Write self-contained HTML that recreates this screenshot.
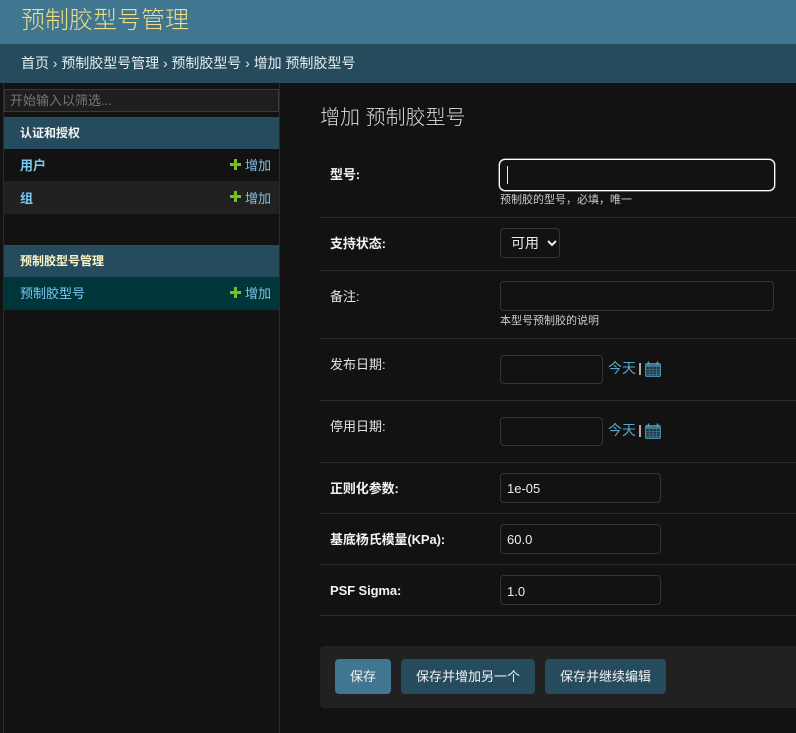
<!DOCTYPE html>
<html lang="zh">
<head>
<meta charset="utf-8">
<style>
*{box-sizing:border-box}
html,body{margin:0;padding:0}
body{width:796px;height:733px;overflow:hidden;position:relative;background:#121212;color:#eee;font-family:"Liberation Sans","Noto Sans CJK SC",sans-serif;font-size:13px}
.a{position:absolute;white-space:nowrap}
.h{left:0;top:0;width:796px;height:44px;background:#417690}
.title{left:21px;top:4px;font-size:24px;line-height:34px;color:#ecdf86;font-weight:300}
.bc{left:0;top:44px;width:796px;height:39px;background:#264b5d}
.crumb{left:21px;top:53px;font-size:14px;line-height:20px;color:#e8eef1;letter-spacing:-.03px}
.side{left:3px;top:83px;width:277px;height:650px;border-left:1px solid #2a2a2a;border-right:1px solid #2a2a2a}
.filter{left:4px;top:89px;width:275px;height:23px;background:#1e1e1e;border:1px solid #3a3a3a;color:#777;font-size:13px;line-height:21px;padding-left:5px}
.cap{left:4px;width:275px;height:32px;background:#264b5d;color:#f4f4f4;font-weight:bold;font-size:12px;line-height:33px;padding-left:16px}
.row{left:4px;width:275px;height:32px;line-height:33px;font-size:13px;color:#79aec8;padding-left:16px}
.row b{color:#79c8f0}
.add{position:absolute;right:8px;top:0;color:#7fc0e2;font-size:13px}
.plus{position:absolute;left:226px;top:10px;width:11px;height:11px}
.line{left:320px;width:476px;height:1px;background:#2a2a2a}
.lab{left:330px;font-size:13px;line-height:18px;color:#e4e4e4}
.lab.b{font-weight:bold;color:#f2f2f2;letter-spacing:-.1px}
.inp{border:1px solid #333;border-radius:4px;background:#121212;color:#eee;font-size:13px;padding-left:6px}
.help{left:500px;font-size:11px;line-height:14px;color:#ccc}
.today{font-size:14px;line-height:20px;color:#5ba6cc}
.sep{width:2px;height:12px;background:#aaa}
.btn{top:659px;height:35px;border-radius:4px;background:#264b5d;color:#f2f2f2;font-size:13px;line-height:35px;text-align:center}
</style>
</head>
<body>
<div class="a h"></div>
<div class="a title">预制胶型号管理</div>
<div class="a bc"></div>
<div class="a crumb">首页 › 预制胶型号管理 › 预制胶型号 › 增加 预制胶型号</div>

<div class="a side"></div>
<div class="a filter">开始输入以筛选...</div>
<div class="a cap" style="top:117px">认证和授权</div>
<div class="a row" style="top:149px;background:#121212"><b>用户</b><span class="add">增加</span><svg class="plus" viewBox="0 0 11 11"><path d="M4 0h3v4h4v3H7v4H4V7H0V4h4z" fill="#70bf2b"/></svg></div>
<div class="a row" style="top:181px;background:#212121;height:33px;line-height:35px"><b>组</b><span class="add">增加</span><svg class="plus" viewBox="0 0 11 11"><path d="M4 0h3v4h4v3H7v4H4V7H0V4h4z" fill="#70bf2b"/></svg></div>
<div class="a cap" style="top:245px;color:#fbf5c9">预制胶型号管理</div>
<div class="a row" style="top:277px;height:33px;background:#00363a;color:#79c8f0">预制胶型号<span class="add">增加</span><svg class="plus" viewBox="0 0 11 11"><path d="M4 0h3v4h4v3H7v4H4V7H0V4h4z" fill="#70bf2b"/></svg></div>

<div class="a" style="left:320px;top:105px;font-size:20px;line-height:27px;color:#ddd;font-weight:300">增加 预制胶型号</div>

<div class="a lab b" style="top:166px">型号:</div>
<div class="a inp" style="left:499px;top:159px;width:276px;height:32px;border:1px solid #fff;border-radius:6px;box-shadow:0 0 0 .5px #bbb"></div>
<div class="a" style="left:507px;top:166px;width:1px;height:18px;background:#eee"></div>
<div class="a help" style="top:193px">预制胶的型号，必填，唯一</div>
<div class="a line" style="top:217px"></div>

<div class="a lab b" style="top:235px">支持状态:</div>
<div class="a inp" style="left:500px;top:228px;width:60px;height:30px;line-height:29px;padding-left:10px;font-size:14px">可用<svg style="position:absolute;left:46px;top:11px" width="10" height="7" viewBox="0 0 10 7"><path d="M1 1l4 4 4-4" fill="none" stroke="#eee" stroke-width="2"/></svg></div>
<div class="a line" style="top:270px"></div>

<div class="a lab" style="top:288px">备注:</div>
<div class="a inp" style="left:500px;top:281px;width:274px;height:30px"></div>
<div class="a help" style="top:314px">本型号预制胶的说明</div>
<div class="a line" style="top:338px"></div>

<div class="a lab" style="top:356px">发布日期:</div>
<div class="a inp" style="left:500px;top:355px;width:103px;height:29px"></div>
<div class="a today" style="left:608px;top:358px">今天</div>
<div class="a sep" style="left:639px;top:363px"></div>
<svg class="a" style="left:645px;top:361px" width="16" height="16" viewBox="0 0 16 16"><rect x=".6" y="2.6" width="14.8" height="12.8" rx="1" fill="#1d3644" stroke="#4f86a3" stroke-width="1.2"/><path d="M1 3h14v3H1z" fill="#417690"/><path d="M3.5 .5v3.5M12.5 .5v3.5" stroke="#5f9cbb" stroke-width="1.6"/><path d="M1 8.5h14M1 11h14M1 13.3h14M4.5 6v9M8 6v9M11.5 6v9" stroke="#42728c" stroke-width=".8"/></svg>
<div class="a line" style="top:400px"></div>

<div class="a lab" style="top:418px">停用日期:</div>
<div class="a inp" style="left:500px;top:417px;width:103px;height:29px"></div>
<div class="a today" style="left:608px;top:420px">今天</div>
<div class="a sep" style="left:639px;top:425px"></div>
<svg class="a" style="left:645px;top:423px" width="16" height="16" viewBox="0 0 16 16"><rect x=".6" y="2.6" width="14.8" height="12.8" rx="1" fill="#1d3644" stroke="#4f86a3" stroke-width="1.2"/><path d="M1 3h14v3H1z" fill="#417690"/><path d="M3.5 .5v3.5M12.5 .5v3.5" stroke="#5f9cbb" stroke-width="1.6"/><path d="M1 8.5h14M1 11h14M1 13.3h14M4.5 6v9M8 6v9M11.5 6v9" stroke="#42728c" stroke-width=".8"/></svg>
<div class="a line" style="top:462px"></div>

<div class="a lab b" style="top:480px">正则化参数:</div>
<div class="a inp" style="left:500px;top:473px;width:161px;height:30px;line-height:29px">1e-05</div>
<div class="a line" style="top:513px"></div>

<div class="a lab b" style="top:531px">基底杨氏模量(KPa):</div>
<div class="a inp" style="left:500px;top:524px;width:161px;height:30px;line-height:30px">60.0</div>
<div class="a line" style="top:564px"></div>

<div class="a lab b" style="top:582px">PSF Sigma:</div>
<div class="a inp" style="left:500px;top:575px;width:161px;height:30px;line-height:31px">1.0</div>
<div class="a line" style="top:615px"></div>

<div class="a" style="left:320px;top:646px;width:476px;height:62px;background:#212121;border-radius:4px 0 0 4px"></div>
<div class="a btn" style="left:335px;width:56px;background:#417690">保存</div>
<div class="a btn" style="left:401px;width:134px">保存并增加另一个</div>
<div class="a btn" style="left:545px;width:121px">保存并继续编辑</div>
</body>
</html>
